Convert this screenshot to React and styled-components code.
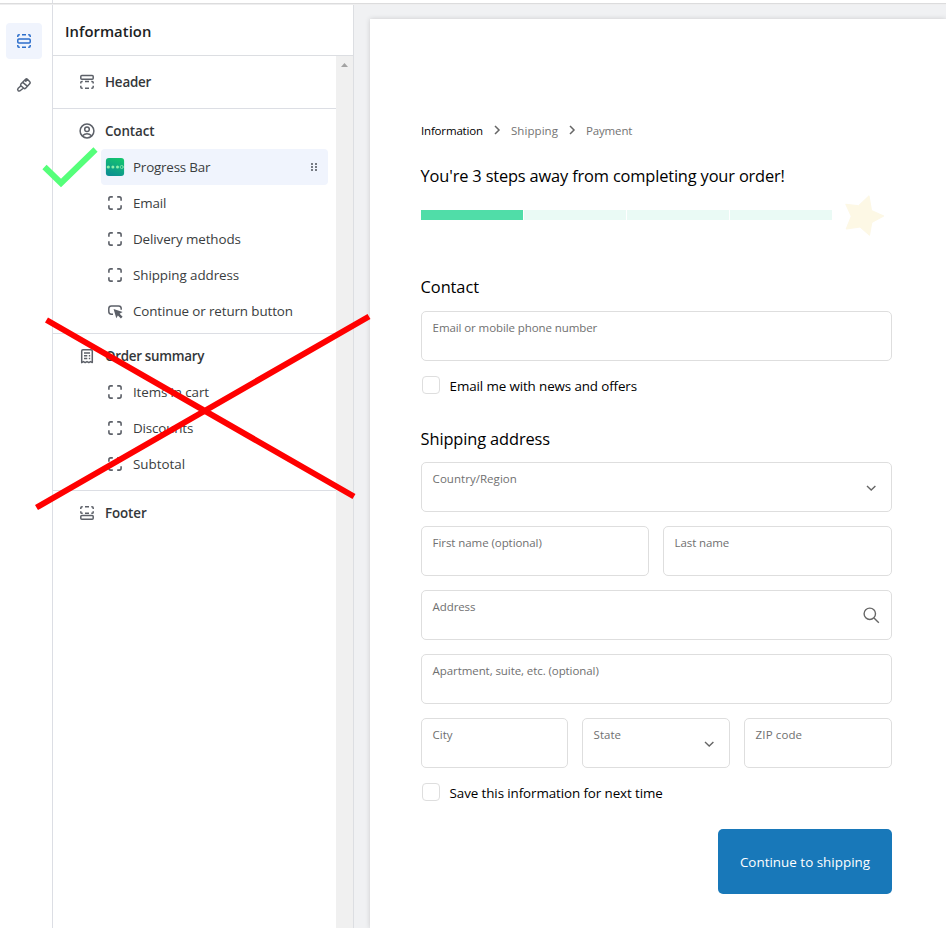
import React from 'react';
import styled, { createGlobalStyle } from 'styled-components';

const GlobalStyle = createGlobalStyle`
  *, *::before, *::after { box-sizing: border-box; }
  body {
    margin: 0;
    background: #fff;
    font-family: "Open Sans", "Noto Sans", sans-serif;
    overflow: hidden;
  }
`;

const Editor = styled.div`
  position: relative;
  display: flex;
  width: 946px;
  height: 928px;
  overflow: hidden;
`;

const Rail = styled.nav`
  display: flex;
  flex-direction: column;
  align-items: center;
  gap: 8px;
  flex: none;
  width: 53px;
  padding: 23px 5px 0 0;
  border-right: 1px solid #dcdee4;
`;

const RailButton = styled.button`
  display: flex;
  align-items: center;
  justify-content: center;
  width: 36px;
  height: 36px;
  padding: 0;
  border: 0;
  border-radius: 4px;
  background: ${(p) => (p.$active ? '#f0f4fd' : 'transparent')};
  color: ${(p) => (p.$active ? '#2c6ecb' : '#5c6068')};
`;

const Main = styled.div`
  display: flex;
  flex-direction: column;
  flex: 1;
  min-width: 0;
`;

const TopEdge = styled.div`
  position: absolute;
  top: 3px;
  left: 0;
  right: 0;
  height: 2px;
  background: linear-gradient(#dcdcdd 50%, #eeeeef 50%);
`;

const Columns = styled.div`
  display: flex;
  flex: 1;
  padding-top: 4px;
  min-height: 0;
`;

const Panel = styled.aside`
  display: flex;
  flex-direction: column;
  flex: none;
  width: 301px;
  border-right: 1px solid #dcdee2;
`;

const PanelTitle = styled.h1`
  margin: 0;
  height: 52px;
  padding: 0 12px 0 12px;
  border-bottom: 1px solid #dcdee2;
  font-size: 14.8px;
  font-weight: 600;
  line-height: 55px;
  letter-spacing: 0.05px;
  color: #202223;
`;

const PanelBody = styled.div`
  display: flex;
  flex: 1;
`;

const Tree = styled.div`
  flex: 1;
`;

const Scrollbar = styled.div`
  display: flex;
  justify-content: center;
  width: 17px;
  padding-top: 7px;
  background: #f0f0f0;
`;

const Section = styled.section`
  padding: ${(p) => p.$top}px 8px ${(p) => p.$bottom}px;
  border-bottom: ${(p) => (p.$last ? 0 : 1)}px solid #dcdee4;
`;

const SectionRow = styled.div`
  display: flex;
  align-items: center;
  gap: 8px;
  height: 36px;
  padding-left: 16px;
  color: #5c6068;
`;

const SectionLabel = styled.span`
  font-size: 13.4px;
  font-weight: 600;
  letter-spacing: ${(p) => p.$track || 0}px;
  color: #34373a;
`;

const BlockRow = styled.div`
  display: flex;
  align-items: center;
  gap: 8px;
  height: 36px;
  margin-left: 40px;
  padding: 0 4px;
  border-radius: 4px;
  color: #5c6068;
  background: ${(p) => (p.$selected ? '#f0f4fd' : 'transparent')};
`;

const BlockLabel = styled.span`
  flex: 1;
  font-size: 13.4px;
  letter-spacing: ${(p) => p.$track || 0}px;
  color: #3a3d40;
`;

const Canvas = styled.main`
  flex: 1;
  display: flex;
  padding: 15px 0 0 16px;
  background: #f0f1f3;
`;

const Checkout = styled.div`
  flex: 1;
  padding: 100px 54px 0 51px;
  background: #fff;
  box-shadow: 0 0 5px rgba(0, 0, 0, 0.16);
  color: #000;
`;

const Breadcrumb = styled.div`
  display: flex;
  align-items: center;
  height: 22px;
  font-size: 11.5px;
`;

const Crumb = styled.span`
  width: ${(p) => p.$w}px;
  white-space: nowrap;
  letter-spacing: ${(p) => p.$track || 0}px;
  color: ${(p) => (p.$current ? '#000' : '#737373')};
`;

const CrumbArrow = styled.svg`
  width: 8px;
  height: 10px;
  margin: 0 10px;
  fill: none;
  stroke: #666;
  stroke-width: 1.5;
`;

const Heading = styled.h2`
  margin: ${(p) => p.$top}px 0 0 -0.4px;
  height: 24px;
  font-size: 16.4px;
  font-weight: 400;
  line-height: 24px;
  letter-spacing: ${(p) => p.$track || 0}px;
  white-space: nowrap;
`;

const Progress = styled.div`
  display: flex;
  align-items: center;
  height: 44px;
  margin-top: 5px;
`;

const Steps = styled.div`
  display: grid;
  grid-template-columns: repeat(4, 1fr);
  gap: 1px;
  width: 411px;
  height: 10px;
`;

const Step = styled.div`
  background: ${(p) => (p.$done ? '#50dda8' : '#eafaf5')};
`;

const Star = styled.svg`
  width: 42px;
  height: 44px;
  margin-left: 11px;
`;

const Row = styled.div`
  display: grid;
  grid-template-columns: ${(p) => p.$cols || '1fr'};
  gap: 14px;
  margin-top: ${(p) => p.$top || 14}px;
`;

const Field = styled.div`
  display: flex;
  justify-content: space-between;
  height: 50px;
  padding: 0 11px 0 10.6px;
  border: 1px solid #dedede;
  border-radius: 5px;
  color: #707070;
`;

const FieldLabel = styled.label`
  padding-top: 8px;
  font-size: 11.5px;
  line-height: 16px;
  letter-spacing: ${(p) => p.$track || 0}px;
  white-space: nowrap;
`;

const FieldIcon = styled.span`
  display: flex;
  align-items: center;
`;

const CheckRow = styled.label`
  display: flex;
  align-items: center;
  gap: 9.6px;
  height: 20px;
  margin: ${(p) => p.$top}px 0 0 1px;
  font-size: 13.4px;
  letter-spacing: ${(p) => p.$track}px;
`;

const Box = styled.span`
  width: 18px;
  height: 18px;
  margin-top: -2px;
  border: 1px solid #dedede;
  border-radius: 4px;
`;

const Submit = styled.button`
  display: block;
  width: 174px;
  height: 65px;
  margin: 26px 0 0 auto;
  padding: 0;
  border: 0;
  border-radius: 5px;
  background: #1878b9;
  color: #fff;
  font: 500 13.4px "Open Sans", "Noto Sans", sans-serif;
  letter-spacing: 0.02px;
`;

const Markup = styled.svg`
  position: absolute;
  inset: 0;
  width: 946px;
  height: 928px;
  pointer-events: none;
`;

const Icon = ({ size = 20, children, w = 1.5 }) => (
  <svg width={size} height={size} viewBox="0 0 20 20" fill="none" stroke="currentColor" strokeWidth={w} strokeLinejoin="round">
    {children}
  </svg>
);

const SectionsIcon = () => (
  <Icon>
    <rect x="3.8" y="7.9" width="12.4" height="4.2" rx="1" />
    <path d="M3.8 6V5q0-1.2 1.2-1.2h.8M8 3.8h4M14.2 3.8h.8q1.2 0 1.2 1.2v1M3.8 14v1q0 1.2 1.2 1.2h.8M8 16.2h4M14.2 16.2h.8q1.2 0 1.2-1.2v-1" />
  </Icon>
);

const BrushIcon = () => (
  <Icon w={1.5}>
    <path d="M6.9 9.1l4.700-4.800q.9-.8 1.800 0l2.400 2.400q.8.9.1 1.900l-4.300 4.600q-.9.800-1.800 0L7 10.800q-.8-.8-.1-1.700zM8.700 7.400l5.200 4.300M13 4.200l-1.500 2.700M7 10.800l-2.800 2.500q-1.100 1.200-.1 2.300 1.200 1 2.300-.1l3.200-2.500" />
  </Icon>
);

const HeaderIcon = () => (
  <Icon>
    <rect x="3.8" y="3.6" width="12.4" height="3.6" rx="1" />
    <path d="M3.8 11.6v-1q0-1.1 1.2-1.1h.7M8 9.5h4M14.3 9.5h.7q1.2 0 1.2 1.1v1M3.8 13.8V15q0 1.2 1.2 1.2h.7M8 16.2h4M14.3 16.2h.7q1.2 0 1.2-1.2v-1.2" />
  </Icon>
);

const FooterIcon = () => (
  <Icon>
    <rect x="3.8" y="12.6" width="12.4" height="3.6" rx="1" />
    <path d="M3.8 6V5q0-1.2 1.2-1.2h.7M8 3.8h4M14.3 3.8h.7q1.2 0 1.2 1.2v1M3.8 8.2v1q0 1.1 1.2 1.1h.7M8 10.3h4M14.3 10.3h.7q1.2 0 1.2-1.1v-1" />
  </Icon>
);

const PersonIcon = () => (
  <Icon>
    <circle cx="10" cy="10" r="6.9" />
    <circle cx="10" cy="8.3" r="2.3" />
    <path d="M5.4 14.8q4.6-4 9.2 0" />
  </Icon>
);

const ReceiptIcon = () => (
  <Icon>
    <path d="M4.7 16.6V5q0-1.3 1.3-1.3h8q1.3 0 1.3 1.3v11.6l-1.8-1-1.7 1-1.8-1-1.8 1-1.7-1zM7 7h6M7 9.7h3.3M11.8 9.7h1.4M7 12.4h3.3M11.8 12.4h1.4" />
  </Icon>
);

const BlockIcon = () => (
  <Icon w={1.6}>
    <path d="M3.9 7.8V5.7q0-1.8 1.8-1.8h2.1M12.2 3.9h2.1q1.8 0 1.8 1.8v2.1M16.1 12.2v2.1q0 1.8-1.8 1.8h-2.1M7.8 16.1H5.7q-1.8 0-1.8-1.8v-2.1" />
  </Icon>
);

const ButtonIcon = () => (
  <Icon>
    <path d="M8 13.3H6.4q-2.600 0-2.600-2.700V7.600q0-2.700 2.600-2.700h7.200q2.600 0 2.600 2.700v1.200" />
    <path d="M8.600 7.900l9 3.200-3 1.700 3 3-1.700 1.700-3-3-1.600 2.700z" fill="currentColor" stroke="none" />
  </Icon>
);

const ProgressAppIcon = () => (
  <svg width="20" height="20" viewBox="0 0 20 20">
    <defs>
      <linearGradient id="app" x1=".7" y1="0" x2=".3" y2="1">
        <stop offset="0" stopColor="#14c46f" />
        <stop offset="1" stopColor="#0c8f92" />
      </linearGradient>
    </defs>
    <rect x=".9" y=".9" width="18.2" height="18.2" rx="3" fill="url(#app)" />
    <g fill="#8df0a8">
      <circle cx="3.3" cy="10" r="1.6" />
      <circle cx="7.9" cy="10" r="1.5" />
      <circle cx="12.5" cy="10" r="1.5" />
    </g>
    <circle cx="16.7" cy="10" r="1.5" fill="none" stroke="#a5f5bb" strokeWidth="1" strokeDasharray="1.6 .7" />
  </svg>
);

const DragHandle = () => (
  <svg width="20" height="20" viewBox="0 0 20 20" fill="#777b83">
    {[6, 9, 12].map((y) => (
      <React.Fragment key={y}>
        <rect x="7" y={y} width="2" height="2" />
        <rect x="11" y={y} width="2" height="2" />
      </React.Fragment>
    ))}
  </svg>
);

const Chevron = () => (
  <svg width="18" height="18" viewBox="0 0 18 18" fill="none" stroke="#666" strokeWidth="1.4">
    <path d="M5 8l4.2 4L13.4 8" />
  </svg>
);

const SearchIcon = () => (
  <svg width="18" height="18" viewBox="0 0 18 18" fill="none" stroke="#666" strokeWidth="1.4">
    <circle cx="7.8" cy="7.8" r="5.7" />
    <path d="M12 12l4.8 4.8" />
  </svg>
);

const Block = ({ label, track, icon, selected }) => (
  <BlockRow $selected={selected}>
    {icon || <BlockIcon />}
    <BlockLabel $track={track}>{label}</BlockLabel>
    {selected && <DragHandle />}
  </BlockRow>
);

const Input = ({ label, track, icon }) => (
  <Field>
    <FieldLabel $track={track}>{label}</FieldLabel>
    {icon && <FieldIcon>{icon}</FieldIcon>}
  </Field>
);

const Arrow = () => (
  <CrumbArrow viewBox="0 0 8 10">
    <path d="M2 1l4 4-4 4" />
  </CrumbArrow>
);

export default function App() {
  return (
    <Editor>
      <GlobalStyle />
      <Rail>
        <RailButton $active><SectionsIcon /></RailButton>
        <RailButton><BrushIcon /></RailButton>
      </Rail>
      <Main>
        <Columns>
          <Panel>
            <PanelTitle>Information</PanelTitle>
            <PanelBody>
              <Tree>
                <Section $top={8} $bottom={8}>
                  <SectionRow><HeaderIcon /><SectionLabel $track={-0.2}>Header</SectionLabel></SectionRow>
                </Section>
                <Section $top={4} $bottom={4}>
                  <SectionRow><PersonIcon /><SectionLabel $track={-0.12}>Contact</SectionLabel></SectionRow>
                  <Block selected label="Progress Bar" track={-0.2} icon={<ProgressAppIcon />} />
                  <Block label="Email" track={-0.15} />
                  <Block label="Delivery methods" track={-0.1} />
                  <Block label="Shipping address" track={-0.07} />
                  <Block label="Continue or return button" track={-0.11} icon={<ButtonIcon />} />
                </Section>
                <Section $top={4} $bottom={8}>
                  <SectionRow><ReceiptIcon /><SectionLabel $track={-0.3}>Order summary</SectionLabel></SectionRow>
                  <Block label="Items in cart" track={-0.12} />
                  <Block label="Discounts" track={-0.15} />
                  <Block label="Subtotal" />
                </Section>
                <Section $top={4} $bottom={0} $last>
                  <SectionRow><FooterIcon /><SectionLabel $track={-0.12}>Footer</SectionLabel></SectionRow>
                </Section>
              </Tree>
              <Scrollbar>
                <svg width="7" height="4" viewBox="0 0 7 4"><path d="M0 4L3.5 0 7 4z" fill="#a3a3a3" /></svg>
              </Scrollbar>
            </PanelBody>
          </Panel>
          <Canvas>
            <Checkout>
              <Breadcrumb>
                <Crumb $w={62} $current $track={-0.17}>Information</Crumb>
                <Arrow />
                <Crumb $w={47} $track={0.06}>Shipping</Crumb>
                <Arrow />
                <Crumb $w={47} $track={-0.15}>Payment</Crumb>
              </Breadcrumb>
              <Heading $top={23} $track={-0.16}>You're 3 steps away from completing your order!</Heading>
              <Progress>
                <Steps><Step $done /><Step /><Step /><Step /></Steps>
                <Star viewBox="0 0 42 44">
                  <path
                    d="M26 2.800L28.500 17.500 40.800 23 28.800 29.500 26.500 42.300 17 34 3.200 36 8.300 23.300 2.800 11.300 15.500 12.700z"
                    fill="#fdf8e5"
                    stroke="#fdf8e5"
                    strokeLinejoin="round"
                  />
                </Star>
              </Progress>
              <Heading $top={38} $track={-0.08}>Contact</Heading>
              <Row $top={12}><Input label="Email or mobile phone number" track={-0.09} /></Row>
              <CheckRow $top={15} $track={-0.12}><Box />Email me with news and offers</CheckRow>
              <Heading $top={31} $track={-0.12}>Shipping address</Heading>
              <Row $top={11}><Input label="Country/Region" track={0.04} icon={<Chevron />} /></Row>
              <Row $cols="228px 229px">
                <Input label="First name (optional)" track={-0.07} />
                <Input label="Last name" track={-0.1} />
              </Row>
              <Row><Input label="Address" track={-0.1} icon={<SearchIcon />} /></Row>
              <Row><Input label="Apartment, suite, etc. (optional)" track={-0.08} /></Row>
              <Row $cols="147px 148px 148px">
                <Input label="City" />
                <Input label="State" icon={<Chevron />} />
                <Input label="ZIP code" track={0.12} />
              </Row>
              <CheckRow $top={15} $track={-0.1}><Box />Save this information for next time</CheckRow>
              <Submit>Continue to shipping</Submit>
            </Checkout>
          </Canvas>
        </Columns>
      </Main>
      <TopEdge />
      <Markup viewBox="0 0 946 928" fill="none" strokeWidth="6">
        <path d="M44.500 167L61 183 95.500 149.500" stroke="#55ff7a" />
        <path d="M46.500 320L354 496.500M36.500 507.500L369 316.500" stroke="#f00" />
      </Markup>
    </Editor>
  );
}
